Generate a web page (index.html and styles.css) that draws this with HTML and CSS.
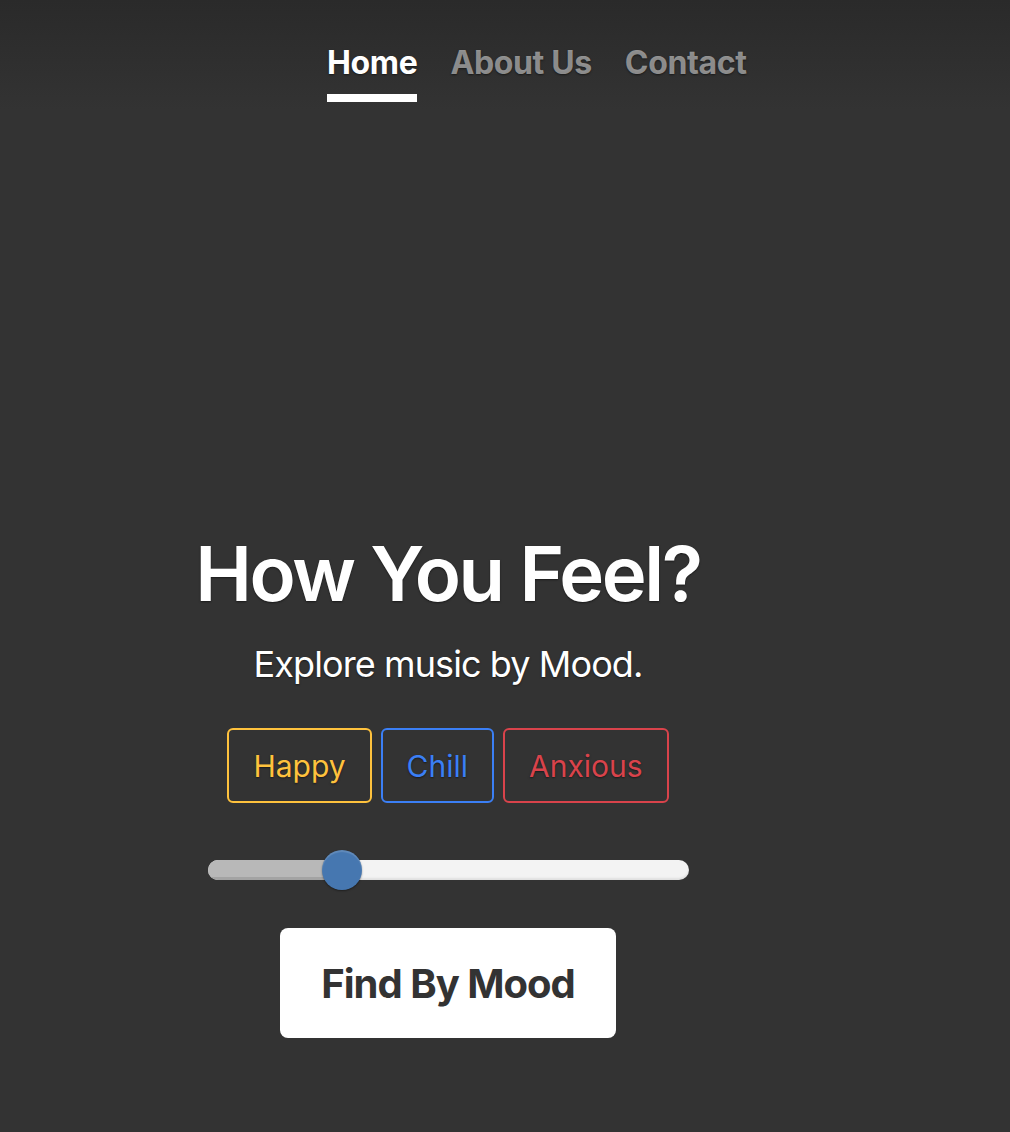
FILE: index.html
```html
<!DOCTYPE html>
<html lang="en">
<head>
<meta charset="utf-8">
<title>How You Feel?</title>
<link rel="stylesheet" href="styles.css">
</head>
<body>
<div class="cover">
  <header class="masthead">
    <nav class="nav">
      <a class="nav-link active" href="#">Home</a>
      <a class="nav-link" href="#">About Us</a>
      <a class="nav-link" href="#">Contact</a>
    </nav>
  </header>
  <main class="hero">
    <h1 class="title">How You Feel?</h1>
    <p class="lead">Explore music by Mood.</p>
    <div class="moods">
      <button class="mood mood-happy">Happy</button>
      <button class="mood mood-chill">Chill</button>
      <button class="mood mood-anxious">Anxious</button>
    </div>
    <div class="slider">
      <div class="track"><div class="fill" style="width:28%"></div></div>
      <div class="thumb" style="left:28%"></div>
    </div>
    <button class="find">Find By Mood</button>
  </main>
</div>
</body>
</html>
```
FILE: styles.css
```css
* { box-sizing: border-box; }
html, body { margin: 0; padding: 0; }
body {
  background: #333;
  color: #fff;
  font-family: Inter, "Noto Sans", "Liberation Sans", sans-serif;
  text-shadow: 0 1px 2px rgba(0,0,0,.5);
}
.cover {
  min-height: 1132px;
  background: linear-gradient(to bottom, #2a2a2a 0, #333 110px);
  display: flex;
  flex-direction: column;
}
.masthead {
  padding-top: 44px;
}
.nav {
  display: flex;
  gap: 33px;
  padding-left: 327px;
}
.nav-link {
  font-size: 32px;
  font-weight: 700;
  line-height: 38px;
  letter-spacing: -0.35px;
  color: rgba(255,255,255,.5);
  text-decoration: none;
  padding-bottom: 12px;
  border-bottom: 8px solid transparent;
}
.nav-link.active {
  color: #fff;
  border-bottom-color: #fff;
}
.hero {
  display: flex;
  flex-direction: column;
  align-items: center;
  padding-right: 114px;
  padding-top: 426px;
}
.title {
  margin: 0;
  font-size: 76px;
  font-weight: 600;
  line-height: 91px;
  letter-spacing: -2.4px;
}
.lead {
  margin: 24px 0 0;
  font-size: 36px;
  font-weight: 400;
  line-height: 43px;
  letter-spacing: -0.9px;
}
.moods {
  margin-top: 42px;
  display: flex;
  gap: 9px;
}
.mood {
  height: 75px;
  padding: 0 24px;
  background: transparent;
  border: 2px solid;
  border-radius: 6px;
  font-family: inherit;
  font-size: 30px;
  font-weight: 400;
  text-shadow: inherit;
}
.mood-happy { color: #ffc23d; border-color: #ffc23d; }
.mood-chill { color: #3b7ff5; border-color: #3b7ff5; }
.mood-anxious { color: #d9434b; border-color: #d9434b; }
.slider {
  position: relative;
  margin-top: 47px;
  width: 481px;
  height: 40px;
  display: flex;
  align-items: center;
}
.track {
  width: 100%;
  height: 20px;
  border-radius: 10px;
  background: #f3f3f3;
  overflow: hidden;
  box-shadow: inset 0 -2px 2px rgba(0,0,0,.08);
}
.fill {
  height: 100%;
  background: #b8b8b8;
  box-shadow: inset 0 -3px 0 #a3a3a3;
}
.thumb {
  position: absolute;
  top: 0;
  width: 40px;
  height: 40px;
  margin-left: -20px;
  border-radius: 50%;
  background: #4677b0;
  box-shadow: inset 0 2px 1px rgba(255,255,255,.15), 0 1px 2px rgba(0,0,0,.4);
}
.find {
  margin-top: 38px;
  width: 336px;
  height: 110px;
  background: #fff;
  color: #333;
  border: 0;
  border-radius: 8px;
  font-family: inherit;
  font-size: 40px;
  font-weight: 700;
  letter-spacing: -1px;
  text-shadow: none;
}
```
